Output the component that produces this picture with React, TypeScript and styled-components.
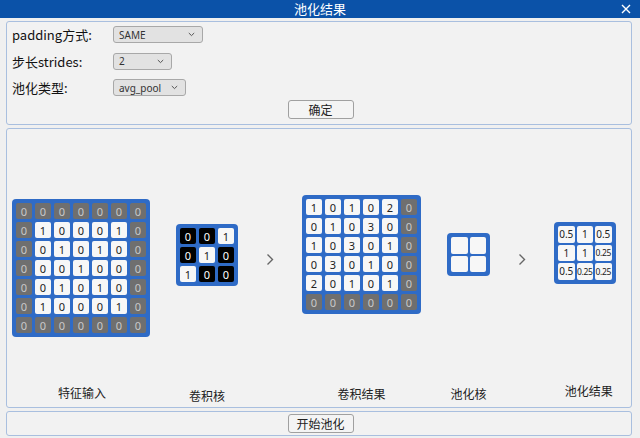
import React from "react";
import styled, { createGlobalStyle } from "styled-components";

const Global = createGlobalStyle`
  html, body { margin: 0; padding: 0; background: #f0f0f0; }
  body { font-family: "Noto Sans CJK SC", "Noto Sans", sans-serif; }
  * { box-sizing: border-box; }
`;

const Window = styled.div`
  width: 640px;
  height: 438px;
  display: flex;
  flex-direction: column;
  background: #f0f0f0;
  overflow: hidden;
`;

const TitleBar = styled.div`
  height: 18px;
  background: #0b52a8;
  color: #fff;
  display: flex;
  align-items: center;
  justify-content: center;
  position: relative;
  font-size: 13px;
  line-height: 18px;
`;

const CloseBtn = styled.svg`
  position: absolute;
  right: 9px;
  top: 4px;
`;

const Body = styled.div`
  flex: 1;
  display: flex;
  flex-direction: column;
  padding: 3px 8px 1px 6px;
  gap: 3px;
`;

const Panel = styled.div<{ $h: number }>`
  height: ${(p) => p.$h}px;
  flex: none;
  background: #f2f2f2;
  border: 1px solid #a9bfdf;
  border-radius: 3px;
`;

const SettingsPanel = styled(Panel)`
  display: flex;
  flex-direction: column;
  padding: 4px 5px 0 5px;
`;

const FormGrid = styled.div`
  display: grid;
  grid-template-columns: 101px auto;
  grid-auto-rows: 17px;
  row-gap: 9.5px;
  align-items: center;
  justify-items: start;
`;

const FieldLabel = styled.div`
  font-size: 13px;
  color: #111;
  line-height: 17px;
  font-family: "Noto Sans CJK SC", "Noto Sans", sans-serif;
`;

const Select = styled.div<{ $w: number }>`
  width: ${(p) => p.$w}px;
  height: 17px;
  border: 1px solid #a8a8a8;
  border-radius: 3px;
  background: #e2e2e2;
  display: flex;
  align-items: center;
  justify-content: space-between;
  padding: 0 7px 0 5px;
  font-size: 10px;
  color: #333;
  font-family: "Noto Sans", sans-serif;
`;

const Chevron = () => (
  <svg width="7" height="5" viewBox="0 0 7 5">
    <path d="M0.8 1 L3.5 3.6 L6.2 1" fill="none" stroke="#555" strokeWidth="1" />
  </svg>
);

const Button = styled.button`
  width: 66px;
  height: 19px;
  border: 1px solid #a0a0a0;
  border-radius: 3px;
  background: #f4f4f4;
  font-family: "Noto Sans CJK SC", sans-serif;
  font-size: 12px;
  color: #222;
  padding: 0;
  line-height: 17px;
`;

const ButtonRow = styled.div<{ $top: number }>`
  display: flex;
  justify-content: center;
  padding-left: 3px;
  margin-top: ${(p) => p.$top}px;
`;

const StagePanel = styled(Panel)`
  display: flex;
  align-items: stretch;
  gap: 26px;
  padding-left: 5px;
`;

const Column = styled.div<{ $top: number; $bottom: number }>`
  display: flex;
  flex-direction: column;
  align-items: center;
  padding-top: ${(p) => p.$top}px;
  padding-bottom: ${(p) => p.$bottom}px;
`;

const Spacer = styled.div`
  flex: 1;
`;

const StageLabel = styled.div<{ $shift?: number }>`
  font-size: 12px;
  line-height: 16px;
  color: #222;
  white-space: nowrap;
  margin-left: ${(p) => (p.$shift ?? 0) * 2}px;
`;

const Frame = styled.div<{ $cols: number }>`
  display: grid;
  grid-template-columns: repeat(${(p) => p.$cols}, 16px);
  grid-auto-rows: 16px;
  gap: 3px;
  padding: 4px;
  background: #2f6bc6;
  border-radius: 4px;
`;

const SmallFrame = styled(Frame)`
  gap: 2px;
  grid-template-columns: repeat(${(p) => p.$cols}, 16.5px);
  grid-auto-rows: 16.5px;
`;

type Variant = "pad" | "light" | "dark";

const Cell = styled.div<{ $v: Variant; $fs?: number }>`
  border-radius: 2px;
  display: flex;
  align-items: center;
  justify-content: center;
  font-family: "Noto Sans", "Open Sans", sans-serif;
  font-size: ${(p) => p.$fs ?? 11}px;
  letter-spacing: ${(p) => ((p.$fs ?? 11) < 9 ? -0.4 : 0)}px;
  background: ${(p) => (p.$v === "pad" ? "#6f6f6f" : p.$v === "dark" ? "#000" : "#f7f7f7")};
  color: ${(p) => (p.$v === "pad" ? "#c9c9c9" : p.$v === "dark" ? "#fff" : "#222")};
  white-space: nowrap;
  overflow: visible;
`;

const Arrow = () => (
  <svg width="12" height="13" viewBox="0 0 12 13">
    <path d="M3.5 1.5 L8.5 6.5 L3.5 11.5" fill="none" stroke="#666" strokeWidth="1.4" />
  </svg>
);

const BottomPanel = styled(Panel)`
  display: flex;
  align-items: center;
  justify-content: center;
  padding-left: 3px;
`;

const feature = [
  [0, 0, 0, 0, 0, 0, 0],
  [0, 1, 0, 0, 0, 1, 0],
  [0, 0, 1, 0, 1, 0, 0],
  [0, 0, 0, 1, 0, 0, 0],
  [0, 0, 1, 0, 1, 0, 0],
  [0, 1, 0, 0, 0, 1, 0],
  [0, 0, 0, 0, 0, 0, 0],
];

const kernel = [
  [0, 0, 1],
  [0, 1, 0],
  [1, 0, 0],
];

const conv = [
  [1, 0, 1, 0, 2, 0],
  [0, 1, 0, 3, 0, 0],
  [1, 0, 3, 0, 1, 0],
  [0, 3, 0, 1, 0, 0],
  [2, 0, 1, 0, 1, 0],
  [0, 0, 0, 0, 0, 0],
];

const pooled = [
  ["0.5", "1", "0.5"],
  ["1", "1", "0.25"],
  ["0.5", "0.25", "0.25"],
];

export default function App() {
  return (
    <>
      <Global />
      <Window>
        <TitleBar>
          池化结果
          <CloseBtn width="10" height="10" viewBox="0 0 10 10">
            <path d="M1 1 L9 9 M9 1 L1 9" stroke="#fff" strokeWidth="1.4" />
          </CloseBtn>
        </TitleBar>
        <Body>
          <SettingsPanel $h={104}>
            <FormGrid>
              <FieldLabel>padding方式:</FieldLabel>
              <Select $w={90}>
                SAME
                <Chevron />
              </Select>
              <FieldLabel>步长strides:</FieldLabel>
              <Select $w={59}>
                2
                <Chevron />
              </Select>
              <FieldLabel>池化类型:</FieldLabel>
              <Select $w={73}>
                avg_pool
                <Chevron />
              </Select>
            </FormGrid>
            <ButtonRow $top={4}>
              <Button>确定</Button>
            </ButtonRow>
          </SettingsPanel>

          <StagePanel $h={280}>
            <Column $top={70} $bottom={6}>
              <Frame $cols={7}>
                {feature.flatMap((row, r) =>
                  row.map((v, c) => {
                    const pad = r === 0 || c === 0 || r === 6 || c === 6;
                    return (
                      <Cell key={`${r}-${c}`} $v={pad ? "pad" : "light"}>
                        {v}
                      </Cell>
                    );
                  })
                )}
              </Frame>
              <Spacer />
              <StageLabel $shift={1}>特征输入</StageLabel>
            </Column>

            <Column $top={95} $bottom={3}>
              <Frame $cols={3}>
                {kernel.flatMap((row, r) =>
                  row.map((v, c) => (
                    <Cell key={`${r}-${c}`} $v={v === 1 ? "light" : "dark"}>
                      {v}
                    </Cell>
                  ))
                )}
              </Frame>
              <Spacer />
              <StageLabel>卷积核</StageLabel>
            </Column>

            <Column $top={124} $bottom={0}>
              <Arrow />
            </Column>

            <Column $top={66} $bottom={5}>
              <Frame $cols={6}>
                {conv.flatMap((row, r) =>
                  row.map((v, c) => {
                    const pad = r === 5 || c === 5;
                    return (
                      <Cell key={`${r}-${c}`} $v={pad ? "pad" : "light"}>
                        {v}
                      </Cell>
                    );
                  })
                )}
              </Frame>
              <Spacer />
              <StageLabel>卷积结果</StageLabel>
            </Column>

            <Column $top={104} $bottom={5}>
              <SmallFrame $cols={2}>
                {[0, 1, 2, 3].map((i) => (
                  <Cell key={i} $v="light" />
                ))}
              </SmallFrame>
              <Spacer />
              <StageLabel>池化核</StageLabel>
            </Column>

            <Column $top={124} $bottom={0}>
              <Arrow />
            </Column>

            <Column $top={93} $bottom={8}>
              <SmallFrame $cols={3}>
                {pooled.flatMap((row, r) =>
                  row.map((v, c) => (
                    <Cell key={`${r}-${c}`} $v="light" $fs={v.length > 3 ? 8.5 : 10}>
                      {v}
                    </Cell>
                  ))
                )}
              </SmallFrame>
              <Spacer />
              <StageLabel $shift={4}>池化结果</StageLabel>
            </Column>
          </StagePanel>

          <BottomPanel $h={25}>
            <Button>开始池化</Button>
          </BottomPanel>
        </Body>
      </Window>
    </>
  );
}
